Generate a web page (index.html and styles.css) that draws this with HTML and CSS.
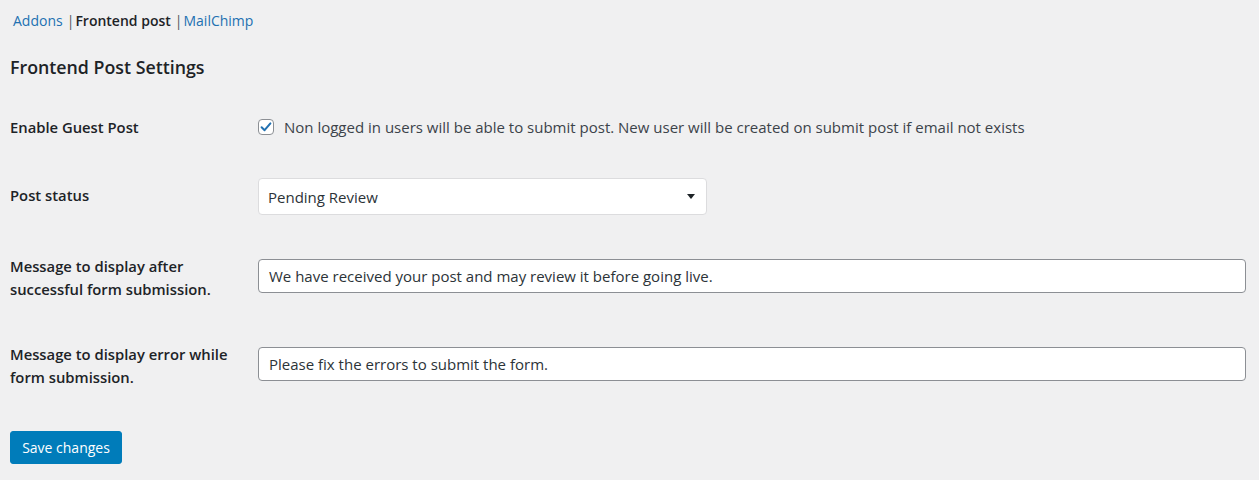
FILE: index.html
```html
<!DOCTYPE html>
<html lang="en">
<head>
<meta charset="utf-8">
<title>Frontend Post Settings</title>
<link rel="stylesheet" href="styles.css">
</head>
<body>
<div class="wrap">
  <ul class="subnav">
    <li><a class="link" href="#">Addons</a><span class="sep">|</span></li>
    <li><span class="current">Frontend post</span><span class="sep">|</span></li>
    <li><a class="link" href="#">MailChimp</a></li>
  </ul>
  <h2 class="title">Frontend Post Settings</h2>
  <div class="form">
    <div class="row r1">
      <div class="label">Enable Guest Post</div>
      <div class="field">
        <label class="check">
          <span class="box"><svg width="16" height="16" viewBox="0 0 16 16"><path d="M3.6 8.3 L6.6 11.2 L12.4 4.4" fill="none" stroke="#2271b1" stroke-width="2" stroke-linecap="round" stroke-linejoin="round"/></svg></span>
          <span class="check-text">Non logged in users will be able to submit post. New user will be created on submit post if email not exists</span>
        </label>
      </div>
    </div>
    <div class="row r2">
      <div class="label">Post status</div>
      <div class="field">
        <div class="select"><span>Pending Review</span><span class="arrow"></span></div>
      </div>
    </div>
    <div class="row r3">
      <div class="label">Message to display after successful form submission.</div>
      <div class="field">
        <div class="input">We have received your post and may review it before going live.</div>
      </div>
    </div>
    <div class="row r3">
      <div class="label">Message to display error while form submission.</div>
      <div class="field">
        <div class="input">Please fix the errors to submit the form.</div>
      </div>
    </div>
  </div>
  <div class="actions"><button class="btn">Save changes</button></div>
</div>
</body>
</html>
```
FILE: styles.css
```css
html, body {
  margin: 0;
  padding: 0;
  background: #f0f0f1;
}
body {
  font-family: "Open Sans", "Noto Sans", sans-serif;
  font-size: 15px;
  color: #3c434a;
}
.wrap {
  display: flex;
  flex-direction: column;
  padding: 0 13px 0 10px;
}
.subnav {
  list-style: none;
  margin: 11px 0 0 3px;
  padding: 0;
  display: flex;
  line-height: 20px;
  font-size: 14px;
}
.subnav li {
  display: flex;
}
.link {
  color: #2271b1;
  text-decoration: none;
}
.current {
  color: #1d2327;
  font-weight: 600;
}
.sep {
  color: #50575e;
  margin: 0 1px 0 4px;
}
.title {
  margin: 24px 0 0 0;
  font-size: 17.8px;
  line-height: 24px;
  font-weight: 600;
  color: #1d2327;
}
.form {
  margin-top: 17px;
  display: flex;
  flex-direction: column;
}
.row {
  display: grid;
  grid-template-columns: 248px 1fr;
  align-items: start;
}
.r1 { height: 68px; }
.r2 { height: 71px; }
.r3 { height: 88px; }
.label {
  padding-top: 20px;
  line-height: 23px;
  font-size: 14.8px;
  font-weight: 600;
  color: #1d2327;
  padding-right: 12px;
}
.check {
  display: flex;
  align-items: center;
  margin-top: 20px;
  line-height: 23px;
}
.box {
  width: 16px;
  height: 16px;
  box-sizing: border-box;
  border: 1px solid #8c8f94;
  border-radius: 4px;
  background: #fff;
  display: flex;
  align-items: center;
  justify-content: center;
  margin-right: 10px;
  margin-top: -2px;
}
.box svg {
  display: block;
  flex: none;
}
.select {
  margin-top: 14px;
  width: 449px;
  height: 37px;
  box-sizing: border-box;
  border: 1px solid #dcdcde;
  border-radius: 4px;
  background: #fff;
  display: flex;
  align-items: center;
  justify-content: space-between;
  padding: 0 10px 0 9px;
  color: #2c3338;
}
.arrow {
  width: 0;
  height: 0;
  border-left: 4.5px solid transparent;
  border-right: 4.5px solid transparent;
  border-top: 5px solid #1d2327;
  margin-right: 1px;
}
.input {
  margin-top: 24px;
  height: 34px;
  box-sizing: border-box;
  border: 1px solid #8c8f94;
  border-radius: 4px;
  background: #fff;
  display: flex;
  align-items: center;
  padding: 0 10px;
  color: #2c3338;
}
.actions {
  margin-top: 20px;
  display: flex;
}
.btn {
  height: 33px;
  width: 112px;
  background: #007cba;
  color: #fff;
  border: 1px solid #007cba;
  border-radius: 3px;
  font-family: inherit;
  font-size: 14px;
  padding: 0;
}
```
